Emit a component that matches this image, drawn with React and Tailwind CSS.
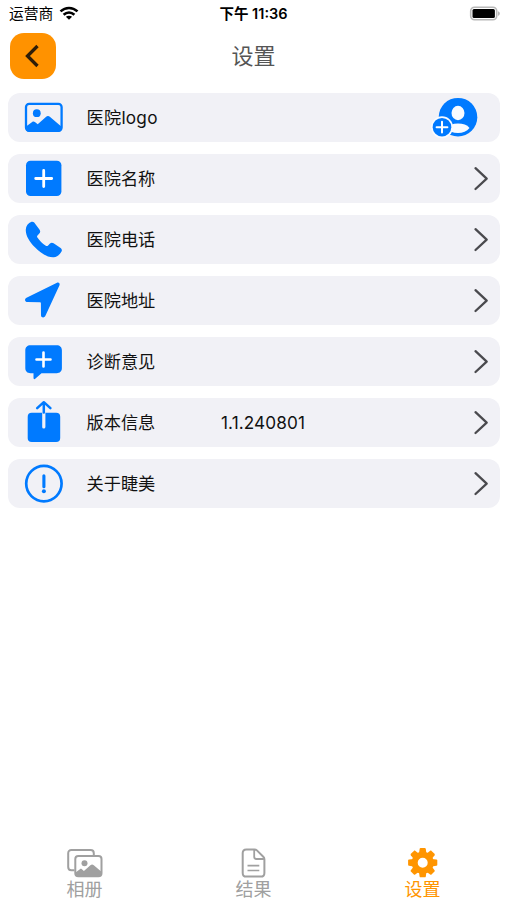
import React from 'react';

const ImageIcon = () => (
  <svg viewBox="0 0 48 48" className="w-12 h-12 text-[#007aff]" fill="currentColor">
    <rect x="6" y="10.8" width="35.6" height="27" rx="3.2" fill="none" stroke="currentColor" strokeWidth="2.3" />
    <circle cx="16.8" cy="20.2" r="3.9" />
    <path d="M6 33.5l6.2-4.6c1-.7 1.8-.6 2.7.1l2.8 2.3 8.2-7.3c1.4-1.2 2.8-1.2 4.2 0l11.5 9.8v2c0 1.8-1.2 3-3 3H9c-1.8 0-3-1.2-3-3z" />
  </svg>
);

const PlusSquareIcon = () => (
  <svg viewBox="0 0 48 48" className="w-12 h-12" fill="none">
    <rect x="6" y="6.8" width="35.4" height="35.2" rx="4.5" fill="#007aff" />
    <path d="M23.7 16.5v16M15.7 24.5h16" stroke="#fff" strokeWidth="2.8" strokeLinecap="round" />
  </svg>
);

const PhoneIcon = () => (
  <svg viewBox="0 0 48 48" className="w-12 h-12 text-[#007aff]" fill="currentColor">
    <path d="M11.5 6.8c1-.4 2-.1 2.7.8l5.4 7.2c.8 1.2.8 2.5-.1 3.5l-2 2.2c-.6.7-.6 1.3-.1 2 2.2 3.3 4.9 5.9 8.4 8.3.9.5 1.6.4 2.3-.3l1.9-1.9c1-1 2.300-1.100 3.600-.3l7 4.800c1.300.9 1.600 2 .9 3.400-1.500 3.100-4.500 5.500-7.800 5.700-5.900.4-12.700-3.600-18.500-9.600C9.200 26.500 5.500 20.300 5.800 14.500c.1-3.600 2.300-6.500 5.700-7.700z" />
  </svg>
);

const LocationIcon = () => (
  <svg viewBox="0 0 48 48" className="w-12 h-12 text-[#007aff]" fill="currentColor">
    <path d="M37 6.8c1.700-.7 3.200.7 2.500 2.500L25.300 40.100c-1 2.200-4.300 1.700-4.300-.8l-.1-12.200c0-.6-.3-.9-.9-.9l-12.500-.1c-2.800 0-3.300-3.300-1-4.400z" />
  </svg>
);

const MessageIcon = () => (
  <svg viewBox="0 0 48 48" className="w-12 h-12" fill="none">
    <path d="M10.5 8.2h26.200c3.200 0 5.200 2 5.200 5.100V31c0 3.200-2 5.200-5.200 5.200H21.500l-6 5.400c-1.200 1.100-2 .7-2-.8v-4.600h-3c-3.200 0-5.200-2-5.200-5.200V13.300c0-3.100 2-5.100 5.200-5.100z" fill="#007aff" />
    <path d="M23.500 15.500v14M16.500 22.500h14" stroke="#fff" strokeWidth="2.600" strokeLinecap="round" />
  </svg>
);

const ShareIcon = () => (
  <svg viewBox="0 0 48 48" className="w-12 h-12" fill="none" strokeLinecap="round" strokeLinejoin="round">
    <rect x="7.7" y="14.7" width="32.5" height="29.3" rx="4" fill="#007aff" />
    <path d="M23.8 15v14" stroke="#f1f1f6" strokeWidth="3.2" />
    <path d="M23.8 14.5V4.8M17.2 10.2l6.6-6 6.6 6" stroke="#007aff" strokeWidth="2.5" />
  </svg>
);

const AlertIcon = () => (
  <svg viewBox="0 0 48 48" className="w-12 h-12" fill="none" stroke="#007aff">
    <circle cx="23.9" cy="24.6" r="17.7" strokeWidth="2.7" />
    <path d="M23.9 16.7v11" strokeWidth="3.1" strokeLinecap="round" />
    <circle cx="23.9" cy="32.2" r="2" fill="#007aff" stroke="none" />
  </svg>
);

const AddAvatarIcon = () => (
  <svg viewBox="0 0 48 48" className="w-12 h-12" fill="none">
    <circle cx="28" cy="24.2" r="19.3" fill="#007aff" />
    <ellipse cx="28" cy="20" rx="6.5" ry="7.2" fill="#f8fbff" />
    <path d="M15.5 35.5c3-3.300 7.300-4.900 12.500-4.900 5 0 9 1.300 11.500 4.300-2.700 3.200-6.700 5-11.500 5-5 0-9.300-1.300-12.500-4.400z" fill="#f8fbff" />
    <circle cx="12" cy="34.2" r="11" fill="#f8fbff" />
    <circle cx="12" cy="34.2" r="9.3" fill="#007aff" />
    <path d="M12 28.8v10.8M6.6 34.2h10.8" stroke="#fff" strokeWidth="2" strokeLinecap="round" />
  </svg>
);

const ChevronIcon = () => (
  <svg viewBox="0 0 16 26" className="w-4 h-[26px]" fill="none" stroke="#4a4a4e" strokeWidth="2.3" strokeLinecap="round" strokeLinejoin="round">
    <path d="M2.500 3.200l11.200 10.400L2.500 24" />
  </svg>
);

const AlbumIcon = () => (
  <svg viewBox="0 0 36 30" className="w-9 h-[30px] text-[#a0a0a0]" fill="currentColor">
    <path d="M7.5 22.300H4.400c-2 0-3.200-1.200-3.200-3.200V5.200C1.200 3.200 2.400 2 4.400 2H23.600c2 0 3.200 1.200 3.200 3.200v2.500" fill="none" stroke="currentColor" strokeWidth="2" />
    <rect x="8.3" y="8" width="26.2" height="20.2" rx="3" fill="none" stroke="currentColor" strokeWidth="2" />
    <circle cx="17.5" cy="15.2" r="3" />
    <path d="M8.5 24.500l4.400-3.300c.7-.5 1.400-.5 2 .1l2 1.600 6.500-5.600c1.200-1 2.200-1 3.400 0l7.700 6.500v2c0 1.600-.9 2.500-2.500 2.500H11c-1.600 0-2.500-.9-2.500-2.500z" />
  </svg>
);

const DocumentIcon = () => (
  <svg viewBox="0 0 36 30" className="w-9 h-[30px]" fill="none" stroke="#a0a0a0" strokeWidth="2" strokeLinejoin="round">
    <path d="M10.3 1.400h8.200c1 0 1.700.3 2.400 1l6.400 6.300c.8.800 1.100 1.500 1.100 2.500v13.700c0 2.500-1.200 3.700-3.600 3.700H10.300c-2.500 0-3.600-1.200-3.600-3.700V5.100c0-2.500 1.100-3.700 3.600-3.700z" />
    <path d="M18.2 1.800v7c0 1.400.8 2.200 2.200 2.200h7.500" strokeWidth="1.8" />
    <path d="M11.5 17.600h11.800M11.500 22.500h11.800" strokeWidth="1.6" />
  </svg>
);

const GearIcon = () => (
  <svg viewBox="0 0 36 30" className="w-9 h-[30px] text-[#ff9500]" fill="currentColor">
    <g transform="translate(17.7 14.7)">
      {[0, 45, 90, 135, 180, 225, 270, 315].map((angle) => (
        <path key={angle} transform={`rotate(${angle})`} d="M-3.700-9l.6-4.700c.1-.6.500-.9 1-.9h4.200c.5 0 .9.300 1 .9l.6 4.700z" />
      ))}
      <circle r="8" fill="none" stroke="currentColor" strokeWidth="6" />
    </g>
  </svg>
);

const rows = [
  { label: '医院logo', icon: ImageIcon, avatar: true },
  { label: '医院名称', icon: PlusSquareIcon },
  { label: '医院电话', icon: PhoneIcon },
  { label: '医院地址', icon: LocationIcon },
  { label: '诊断意见', icon: MessageIcon },
  { label: '版本信息', icon: ShareIcon, value: '1.1.240801' },
  { label: '关于睫美', icon: AlertIcon },
];

const tabs = [
  { label: '相册', icon: AlbumIcon },
  { label: '结果', icon: DocumentIcon },
  { label: '设置', icon: GearIcon, active: true },
];

const StatusBar = () => (
  <div className="grid grid-cols-3 items-center h-7 pl-[9px] pr-[7px] text-black">
    <div className="flex items-center gap-1.5 text-[14.8px] leading-none">
      <span>运营商</span>
      <svg viewBox="0 0 20 14" className="w-5 h-3.5 -mt-0.5" fill="none" stroke="currentColor" strokeWidth="2.6">
        <path d="M1.500 5.400c5-4.600 12-4.600 17 0M4.600 8.700c3.300-2.900 7.500-2.900 10.800 0" />
        <path d="M6.900 10.800c1.900-1.500 4.300-1.500 6.200 0L10 13.800z" fill="currentColor" stroke="none" />
      </svg>
    </div>
    <div className="-ml-0.5 text-center text-[14.5px] leading-none font-semibold whitespace-nowrap">下午 11:36</div>
    <svg viewBox="0 0 31 15" className="w-[31px] h-[15px] justify-self-end -mt-0.5" fill="none">
      <rect x="1.7" y="1.2" width="26" height="12.6" rx="3.8" stroke="#b8b8b8" strokeWidth="1.6" />
      <rect x="3.5" y="3" width="22.4" height="9" rx="1.5" fill="#000" />
      <path d="M29.2 5.200c2 .8 2 3.800 0 4.600z" fill="#a8a8a8" />
    </svg>
  </div>
);

const SettingRow = ({ icon: Icon, label, value, avatar }) => (
  <div className="flex items-center h-[48.5px] pl-3 pr-[11px] rounded-xl bg-[#f1f1f6] text-[17.2px] text-[#111]">
    <Icon />
    <span className={`ml-[18.5px] w-[134.5px] pt-0.5 ${avatar ? 'tracking-[0.25px]' : ''}`}>{label}</span>
    <span className="flex-1 pt-0.5 tracking-[0.1px]">{value}</span>
    {avatar ? (
      <div className="mr-[11px]"><AddAvatarIcon /></div>
    ) : (
      <ChevronIcon />
    )}
  </div>
);

export default function App() {
  return (
    <div className="flex flex-col w-full h-[900px] bg-white font-['Inter','Noto_Sans_CJK_SC',sans-serif]">
      <StatusBar />

      <header className="grid grid-cols-3 items-center h-14 px-[9px]">
        <button className="ml-px flex items-center justify-center w-[46px] h-[46px] rounded-[14px] bg-[#ff9200]">
          <svg viewBox="0 0 24 24" className="w-6 h-6" fill="none" stroke="#2e1d08" strokeWidth="3.3">
            <path d="M16.5 2L6.500 12l10 10" />
          </svg>
        </button>
        <h1 className="text-center text-[22px] leading-none text-[#555]">设置</h1>
      </header>

      <main className="flex flex-1 flex-col gap-[12.5px] pt-[9px] pl-2 pr-[7px]">
        {rows.map((row) => (
          <SettingRow key={row.label} {...row} />
        ))}
      </main>

      <nav className="grid grid-cols-3 h-[52px]">
        {tabs.map(({ icon: Icon, label, active }) => (
          <div key={label} className={`flex flex-col items-center text-[18px] leading-6 ${active ? 'text-[#ff9500]' : 'text-[#a0a0a0]'}`}>
            <Icon />
            <span>{label}</span>
          </div>
        ))}
      </nav>
    </div>
  );
}
